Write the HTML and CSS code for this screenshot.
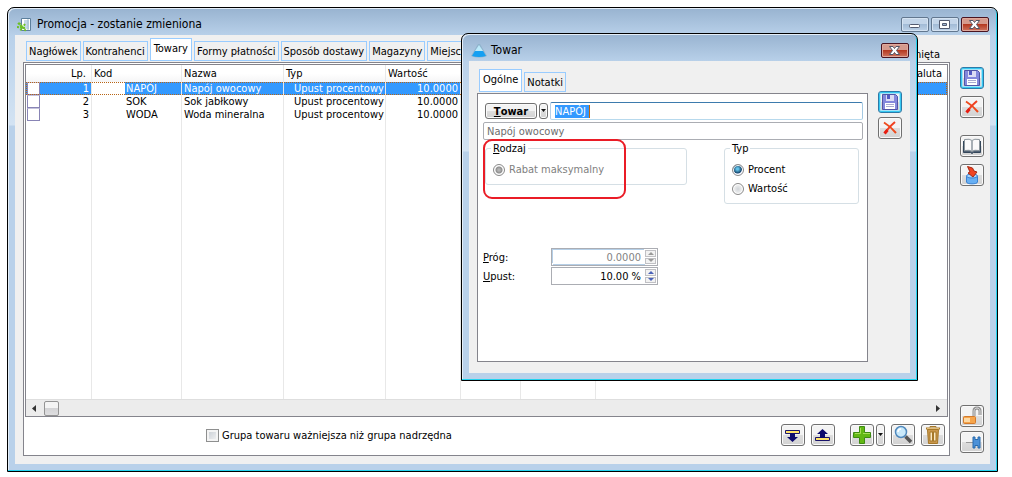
FILE: index.html
```html
<!DOCTYPE html>
<html lang="pl">
<head>
<meta charset="utf-8">
<title>Promocja</title>
<link rel="stylesheet" href="styles.css">
</head>
<body>
<main class="window main-window">
  <header class="titlebar">
    <svg class="title-icon" width="16" height="16" viewBox="0 0 16 16"><path d="M4.500 1.500h9v12h-9z" fill="#fff" stroke="#5c7f9c"/><path d="M7 3h5v9H7z" fill="#c6d9e8"/><path d="M11 2v11" stroke="#9bb8cc"/><path d="M1 6l8 8M8 7L3 14M0 10l9 1M2 6l3 3" stroke="#6cc024" stroke-width="2" stroke-dasharray="2 1"/></svg>
    <h1 class="title">Promocja - zostanie zmieniona</h1>
    <div class="controls">
      <button class="ctl" aria-label="Minimalizuj"><svg width="28" height="15" viewBox="0 0 28 15"><rect x="8.500" y="7.500" width="10" height="3" rx="1" fill="#fff" stroke="#535b70"/></svg></button>
      <button class="ctl" aria-label="Maksymalizuj"><svg width="28" height="15" viewBox="0 0 28 15"><path d="M8.500 3.500h10v8h-10z" fill="#fff" stroke="#535b70"/><path d="M11.500 6.500h4v2h-4z" fill="#9fb7d3" stroke="#535b70"/></svg></button>
      <button class="ctl ctl-close" aria-label="Zamknij"><svg width="28" height="15" viewBox="0 0 28 15"><path d="M8.500 3.500h3.500l1.500 2 1.500-2h3.500L15.500 7.500l3 4H15l-1.500-2-1.500 2H8.500l3-4z" fill="#fff" stroke="#535666"/></svg></button>
    </div>
  </header>
  <div class="content">
    <section class="workspace">
      <nav class="tabs main-tabs">
        <button class="tab">Nagłówek</button>
        <button class="tab">Kontrahenci</button>
        <button class="tab active">Towary</button>
        <button class="tab">Formy płatności</button>
        <button class="tab">Sposób dostawy</button>
        <button class="tab">Magazyny</button>
        <button class="tab">Miejsca</button>
        <span class="status">Zamknięta</span>
      </nav>
      <div class="panel main-panel">
        <div class="grid">
          <table class="items">
            <colgroup><col class="c-lp"><col class="c-kod"><col class="c-nazwa"><col class="c-typ"><col class="c-wart"><col class="c-a"><col class="c-b"><col></colgroup>
            <thead><tr><th class="num">Lp.</th><th>Kod</th><th>Nazwa</th><th>Typ</th><th>Wartość</th><th></th><th></th><th class="end">Waluta</th></tr></thead>
            <tbody>
              <tr class="selected"><td class="lp"><input type="checkbox" class="rowcheck" aria-label="Zaznacz 1"><span>1</span></td><td class="kod">NAPÓJ</td><td>Napój owocowy</td><td class="typ">Upust procentowy</td><td class="num">10.0000</td><td></td><td></td><td></td></tr>
              <tr><td class="lp"><input type="checkbox" class="rowcheck" aria-label="Zaznacz 2"><span>2</span></td><td class="kod">SOK</td><td>Sok jabłkowy</td><td class="typ">Upust procentowy</td><td class="num">10.0000</td><td></td><td></td><td></td></tr>
              <tr><td class="lp"><input type="checkbox" class="rowcheck" aria-label="Zaznacz 3"><span>3</span></td><td class="kod">WODA</td><td>Woda mineralna</td><td class="typ">Upust procentowy</td><td class="num">10.0000</td><td></td><td></td><td></td></tr>
              <tr class="filler"><td></td><td></td><td></td><td></td><td></td><td></td><td></td><td></td></tr>
            </tbody>
          </table>
          <div class="hscroll">
            <button class="arrow" aria-label="W lewo"><svg width="16" height="15" viewBox="0 0 16 15"><path d="M9 4v7L5 7.500z" fill="#333"/></svg></button>
            <span class="thumb"></span>
            <button class="arrow arrow-right" aria-label="W prawo"><svg width="16" height="15" viewBox="0 0 16 15"><path d="M6 4v7l4-3.500z" fill="#333"/></svg></button>
          </div>
        </div>
        <footer class="bottom">
          <label class="check"><input type="checkbox" class="box"><span>Grupa towaru ważniejsza niż grupa nadrzędna</span></label>
          <div class="tools">
            <button class="btn" aria-label="W dół"><svg width="20" height="18" viewBox="0 0 20 18"><path d="M2.500 4.500h14v3h-14z" fill="#ffe36a" stroke="#19146b"/><path d="M7 7h5v4h3l-5.500 5L4 11h3z" fill="#0d0b6d"/></svg></button>
            <button class="btn" aria-label="W górę"><svg width="20" height="18" viewBox="0 0 20 18"><path d="M2.500 11.500h14v3h-14z" fill="#ffe36a" stroke="#19146b"/><path d="M7 12h5V8h3L9.500 3 4 8h3z" fill="#0d0b6d"/></svg></button>
            <span class="sep"></span>
            <button class="btn" aria-label="Dodaj"><svg width="20" height="20" viewBox="0 0 20 20"><path d="M7.500 1.500h5v6h6v5h-6v6h-5v-6h-6v-5h6z" fill="#62b814" stroke="#3c8a12"/><path d="M8.500 3v5.500H3M11 8.500h7" stroke="#a5df58" fill="none"/></svg></button>
            <button class="btn drop" aria-label="Opcje dodawania"><svg width="7" height="4" viewBox="0 0 7 4"><path d="M1 0h5L3.500 3z" fill="#111"/></svg></button>
            <span class="sep small"></span>
            <button class="btn" aria-label="Podgląd"><svg width="20" height="20" viewBox="0 0 20 20"><path d="M12.500 11.500l5.500 5.500" stroke="#555" stroke-width="3.500"/><circle cx="8" cy="7" r="5.500" fill="#c9e9fb" stroke="#5089bd" stroke-width="1.500"/><path d="M5 7q0-3 3-3" stroke="#fff" stroke-width="1.500" fill="none"/></svg></button>
            <span class="sep small"></span>
            <button class="btn" aria-label="Usuń"><svg width="20" height="20" viewBox="0 0 20 20"><path d="M4.500 4.500h11l-1 14h-9z" fill="#c9974c" stroke="#a67829"/><path d="M3 3.500h14" stroke="#a67829" stroke-width="2"/><path d="M7 2.500V1.500h6v1" stroke="#a67829" fill="none"/><path d="M4 3.500h12" stroke="#e2bd79"/><path d="M7 7h6v9H7z" fill="#fbe9c4" stroke="#a67829"/><path d="M10 7v9" stroke="#a67829" stroke-width="2"/></svg></button>
          </div>
        </footer>
      </div>
    </section>
    <aside class="side">
      <button class="btn primary" aria-label="Zapisz"><svg width="16" height="16" viewBox="0 0 16 16"><path d="M.5.5h13l2 2v13H.5z" fill="#8488dc" stroke="#5155a6"/><path d="M4 1h8v6H4z" fill="#dcdcf4"/><path d="M5 1h3v4H5z" fill="#5359c2"/><path d="M3 9h10v6H3z" fill="#fff"/><path d="M4 10.500h8M4 12.500h8" stroke="#a8aad0"/></svg></button>
      <button class="btn" aria-label="Anuluj"><svg width="18" height="18" viewBox="0 0 18 18"><path d="M3 3.500Q9 7 15 14" stroke="#ee4a1c" stroke-width="2" fill="none"/><path d="M14 3Q7 9 4 14" stroke="#f04020" stroke-width="2" fill="none"/><path d="M6.500 11L3.500 14.500" stroke="#e81c10" stroke-width="3"/></svg></button>
      <span class="side-gap"></span>
      <button class="btn" aria-label="Książka"><svg width="20" height="18" viewBox="0 0 20 18"><path d="M1.500 4v11.500h7l1.500 1 1.500-1h7V4" fill="#516174" stroke="#34475a"/><path d="M2.500 2.500q5.500-1 7.500 1 2-2 7.500-1v11q-5.500-1-7.500 1-2-2-7.500-1z" fill="#fafafa" stroke="#8b959c"/><path d="M10 4v10" stroke="#a8afb5" stroke-width="2"/></svg></button>
      <button class="btn" aria-label="Importuj"><svg width="20" height="20" viewBox="0 0 20 20"><path d="M4.500 11v6c0 2.500 11 2.500 11 0v-6z" fill="#67aff3" stroke="#3b82d2"/><ellipse cx="10" cy="11" rx="5.500" ry="2" fill="#a8d4fb" stroke="#3b82d2"/><path d="M5.500 1.500l5 1.500 1.500 3 3 1-4 5-5-4 2-1z" fill="#f04423" stroke="#a72812"/></svg></button>
      <span class="side-fill"></span>
      <button class="btn" aria-label="Odblokuj"><svg width="22" height="20" viewBox="0 0 22 20"><path d="M13 10V5c0-4 6-4 6 0v4" fill="none" stroke="#8e8e8e" stroke-width="3"/><path d="M13 10V5c0-4 6-4 6 0v4" fill="none" stroke="#ddd"/><rect x="2.500" y="10.500" width="12" height="7" rx="1" fill="#f6a54b" stroke="#d37a2c"/><path d="M3 12h6v4H3z" fill="#fdd9a4"/></svg></button>
      <button class="btn" aria-label="Przypnij"><svg width="20" height="18" viewBox="0 0 20 18"><path d="M4 9.500h7" stroke="#999"/><path d="M11 4h2v2.500h3V4h2v11h-2v-2.500h-3V15h-2z" fill="#4b91d8" stroke="#286bad"/></svg></button>
    </aside>
  </div>
</main>

<section class="window dialog" role="dialog" aria-label="Towar">
  <header class="titlebar">
    <svg class="title-icon" width="16" height="16" viewBox="0 0 16 16"><path d="M7 1h2l7 12q-8 3-16 0z" fill="#8fb3cc"/><path d="M8 2L4 8h8z" fill="#bceafa"/><path d="M4 8h8l3 5q-7 2-14 0z" fill="#159ff2"/></svg>
    <h2 class="title">Towar</h2>
    <div class="controls">
      <button class="ctl ctl-close" aria-label="Zamknij okno"><svg width="28" height="15" viewBox="0 0 28 15"><path d="M8.500 3.500h3.500l1.500 2 1.500-2h3.500L15.500 7.500l3 4H15l-1.500-2-1.500 2H8.500l3-4z" fill="#fff" stroke="#535666"/></svg></button>
    </div>
  </header>
  <div class="content">
    <section class="workspace">
      <nav class="tabs dialog-tabs">
        <button class="tab active">Ogólne</button>
        <button class="tab">Notatki</button>
      </nav>
      <div class="panel form">
        <div class="line">
          <button class="btn towar"><u>T</u>owar</button>
          <button class="btn drop short" aria-label="Wybierz towar"><svg width="7" height="4" viewBox="0 0 7 4"><path d="M1 0h5L3.500 3z" fill="#111"/></svg></button>
          <div class="field code"><mark class="hl"><input class="code-input" aria-label="Kod towaru" value="NAPÓJ"></mark></div>
        </div>
        <input class="field name" aria-label="Nazwa towaru" value="Napój owocowy" disabled>
        <div class="groups">
          <fieldset class="group rodzaj"><legend><u>R</u>odzaj</legend>
            <label class="opt off"><input type="radio" class="radio" name="rodzaj" checked disabled><span>Rabat maksymalny</span></label>
          </fieldset>
          <fieldset class="group typ-group"><legend>Typ</legend>
            <label class="opt"><input type="radio" class="radio" name="typ" checked><span>Procent</span></label>
            <label class="opt"><input type="radio" class="radio" name="typ"><span>Wartość</span></label>
          </fieldset>
          <span class="highlight"></span>
        </div>
        <div class="values">
          <label for="prog"><u>P</u>róg:</label>
          <div class="spin off"><input id="prog" value="0.0000" disabled><span class="steps"><button disabled aria-label="Więcej"></button><button disabled aria-label="Mniej"></button></span></div>
          <label for="upust"><u>U</u>pust:</label>
          <div class="spin"><input id="upust" value="10.00 %"><span class="steps"><button aria-label="Zwiększ"></button><button aria-label="Zmniejsz"></button></span></div>
        </div>
      </div>
    </section>
    <aside class="side">
      <button class="btn primary" aria-label="Zapisz towar"><svg width="16" height="16" viewBox="0 0 16 16"><path d="M.5.5h13l2 2v13H.5z" fill="#8488dc" stroke="#5155a6"/><path d="M4 1h8v6H4z" fill="#dcdcf4"/><path d="M5 1h3v4H5z" fill="#5359c2"/><path d="M3 9h10v6H3z" fill="#fff"/><path d="M4 10.500h8M4 12.500h8" stroke="#a8aad0"/></svg></button>
      <button class="btn" aria-label="Anuluj zmiany"><svg width="18" height="18" viewBox="0 0 18 18"><path d="M3 3.500Q9 7 15 14" stroke="#ee4a1c" stroke-width="2" fill="none"/><path d="M14 3Q7 9 4 14" stroke="#f04020" stroke-width="2" fill="none"/><path d="M6.500 11L3.500 14.500" stroke="#e81c10" stroke-width="3"/></svg></button>
    </aside>
  </div>
</section>
</body>
</html>
```
FILE: styles.css
```css
* { box-sizing: border-box; }
body {
  margin: 0;
  height: 100vh;
  padding: 7px 14px 5px 7px;
  background: #fff;
  color: #000;
  position: relative;
  overflow: hidden;
}
body, button, input { font-family: "DejaVu Sans Condensed", "DejaVu Sans", sans-serif; font-size: 11px; line-height: 13px; }
button { padding: 0; color: #000; }
input { margin: 0; }

/* Windows */
.window {
  display: flex;
  flex-direction: column;
  border: 1px solid #000;
  border-radius: 7px 7px 0 0;
  padding: 0 7px 7px;
  background: linear-gradient(#98b3d0, #b9d1ea 28px, #d3e3f3 117px, #b9d1ea 118px);
  box-shadow: inset -1px -1px 0 #23d3ef, inset 1px 1px 0 #e4eef8;
}
.main-window { height: 100%; }
.dialog { position: absolute; left: 461px; right: 94px; top: 33px; bottom: 96px; }
.titlebar { display: flex; align-items: center; height: 27px; flex: none; padding: 6px 1px 0 2px; }
.title { margin: 0 0 0 4px; font-size: 12px; font-weight: 400; flex: 1; }
.title-icon { flex: none; }
.controls { display: flex; gap: 2px; }
.ctl {
  width: 28px;
  height: 15px;
  border: 1px solid #62778f;
  border-radius: 2px;
  background: linear-gradient(#c3d5e9 45%, #a2bbd6 50%, #bdd2e8);
  display: flex;
  align-items: center;
  justify-content: center;
  overflow: hidden;
  box-shadow: inset 0 0 0 1px #d5e3f2;
}
.ctl svg { flex: none; }
.ctl-close { border-color: #4a1420; background: linear-gradient(#d59a8d 45%, #b53a22 50%, #cf7560); box-shadow: inset 0 0 0 1px #e0a99c; }
.content { flex: 1; min-height: 0; display: flex; background: #f0f0f0; padding: 4px 6px 8px 8px; gap: 10px; }
.dialog .content { padding: 8px 8px 11px 8px; }
.workspace { flex: 1; min-width: 0; display: flex; flex-direction: column; }
.panel { flex: 1; min-height: 0; border: 1px solid #84848c; background: #fff; display: flex; flex-direction: column; }

/* Tabs */
.tabs { display: flex; align-items: flex-end; gap: 2px; height: 23px; flex: none; padding-left: 3px; padding-bottom: 1px; }
.dialog-tabs { height: 24px; padding-left: 2px; }
.tab { height: 20px; border: 1px solid #99ccff; background: #f0f0f0; padding: 0 2px; white-space: nowrap; flex: none; }
.tab.active { height: 23px; background: #fff; padding: 0 3px 3px; }
.status { margin-left: auto; padding-right: 10px; }

/* Table */
.grid { flex: 1; min-height: 0; margin: 1px 1px 0; border: 1px solid #84848c; display: flex; flex-direction: column; }
.items { width: 100%; flex: 1; border-collapse: separate; border-spacing: 0; table-layout: fixed; display: table; height: 334px; }
.c-lp { width: 66px; }
.c-kod { width: 90px; }
.c-nazwa { width: 102px; }
.c-typ { width: 102px; }
.c-wart { width: 75px; }
.c-a { width: 60px; }
.c-b { width: 75px; }
.items th { height: 17px; padding: 0 2px; text-align: left; font-weight: 400; border-right: 1px solid #e8e8e8; background: linear-gradient(#fff 50%, #f5f5f6); }
.items td { height: 13px; padding: 0 2px; border-right: 1px solid #e8e8e8; white-space: nowrap; line-height: 13px; }
.items .num { text-align: right; }
.items th.num { padding-right: 5px; }
.items .end { text-align: right; padding-right: 5px; }
.items .kod { padding-left: 34px; }
.items .typ { padding-left: 10px; padding-right: 0; }
.items .filler td { height: auto; }
.items th:last-child, .items td:last-child { border-right: 0; }
.items .lp { padding: 0 2px 0 1px; }
.lp span { float: right; }
.rowcheck { appearance: none; float: left; width: 13px; height: 13px; border: 1px solid #8884b5; border-top-color: #c4c2dc; background: #fff; }
.selected { outline: 1px dotted #b86515; outline-offset: -1px; }
.selected td { background: #3399ff; color: #fff; }
.selected .kod { background: linear-gradient(90deg, #fff 33px, #3399ff 33px); }

.hscroll { display: flex; align-items: center; height: 17px; flex: none; background: #ececec; border-top: 1px solid #dedede; padding: 0 1px; }
.arrow { border: 0; background: none; width: 16px; height: 15px; }
.arrow-right { margin-left: auto; }
.thumb { width: 15px; height: 15px; margin-left: 1px; border: 1px solid #949494; border-radius: 2px; background: linear-gradient(#f4f4f4 45%, #d4d4d6 50%, #dedee0); }

/* Bottom toolbar */
.bottom { display: flex; align-items: center; justify-content: space-between; height: 38px; flex: none; padding: 0 4px 2px 182px; }
.check { display: flex; align-items: center; gap: 3px; }
.box { appearance: none; width: 13px; height: 13px; border: 1px solid #8e8f8f; background: linear-gradient(135deg, #c5cbd2, #f5f5f5); box-shadow: inset 0 0 0 2px #f4f4f4; }
.tools { display: flex; gap: 2px; }
.tools .btn + .btn:nth-child(2) { margin-left: 4px; }
.sep { width: 11px; }
.sep.small { width: 2px; }
.btn {
  display: flex;
  align-items: center;
  justify-content: center;
  flex: none;
  width: 24px;
  height: 22px;
  border: 1px solid #707070;
  border-radius: 3px;
  background: linear-gradient(#f3f3f3 48%, #dddddd 52%, #d2d2d2);
  box-shadow: inset 0 0 0 1px #fafafa;
}
.btn svg { flex: none; }
.btn.drop { width: 9px; }
.btn.drop.short { height: 16px; }
.btn.primary { border-color: #2c7aa8; box-shadow: inset 0 0 0 1px #35c8f2, inset 0 0 0 2px #a5e3f7; }

/* Side toolbar */
.side { display: flex; flex-direction: column; gap: 7px; flex: none; padding-top: 28px; padding-bottom: 3px; }
.side-gap { height: 3px; }
.side-fill { flex: 1; }
.side .btn:last-child { margin-top: -3px; }
.dialog .side { gap: 4px; padding-top: 22px; }
.dialog .side .btn:last-child { margin-top: 0; }

/* Form */
.form { padding: 8px 4px 0 5px; }
.line { display: flex; align-items: center; gap: 2px; padding-left: 2px; }
.towar { width: 52px; height: 16px; font-weight: 700; }
.field { height: 18px; border: 1px solid #abadb3; border-radius: 2px; background: #fff; padding: 0 3px; }
.code { flex: 1; display: flex; align-items: center; border-color: #3d7bad #a4c9e3 #b7d9ed #b5cfe7; padding-left: 4px; }
.hl { display: flex; background: #3399ff; border-right: 1px solid #c86400; }
.code-input { border: 0; padding: 0; background: none; color: #fff; width: 34px; height: 13px; outline: 0; }
.name { width: 100%; margin-top: 2px; color: #6d6d6d; }
.groups { display: flex; align-items: flex-start; justify-content: space-between; position: relative; height: 102px; padding: 2px 4px 0 2px; }
.group { margin: 0; min-width: 0; border: 1px solid #d5dfe5; border-radius: 3px; padding: 5px 8px 4px 7px; }
.group legend { padding: 0 2px; margin-left: -2px; height: 13px; }
.rodzaj { width: 202px; height: 43px; }
.typ-group { width: 135px; height: 62px; }
.opt { display: flex; align-items: center; gap: 4px; height: 19px; }
.opt.off { color: #808080; }
.radio { appearance: none; width: 12px; height: 12px; border: 1px solid #8a8a8a; border-radius: 50%; background: radial-gradient(#d0d4d8, #f4f4f4 70%); box-shadow: inset 0 0 0 1px #fff; }
.radio:checked { background: radial-gradient(circle at 45% 40%, #62c3ea 0 1px, #174a70 4px, #eef 5px); }
.radio:disabled { background: radial-gradient(#b4b4b4 0 1px, #8f8f8f 3px, #f2f2f2 4px); }
.highlight { position: absolute; left: 0; top: -1px; width: 143px; height: 60px; border: 2px solid #ea1c26; border-radius: 9px; }
.values { display: grid; grid-template-columns: 68px 107px; row-gap: 1px; padding-top: 6px; align-items: center; }
.spin { height: 18px; border: 1px solid #abadb3; display: flex; padding: 1px; }
.spin input { flex: 1; min-width: 0; border: 0; padding: 0 4px 0 0; text-align: right; background: #fff; color: #000; }
.spin.off input { color: #838383; box-shadow: -1px -1px 0 #b5cfe7, 0 1px 0 #b5cfe7; }
.steps { display: flex; flex-direction: column; width: 11px; gap: 1px; }
.steps button { flex: 1; border: 1px solid #c0c0c4; background: #f2f2f2; display: flex; align-items: center; justify-content: center; min-height: 0; }
.steps button::after { content: ""; border: 3px solid transparent; border-top: 0; border-bottom: 3px solid #4a62b8; }
.steps button:last-child::after { border-bottom: 0; border-top: 3px solid #4a62b8; }
.steps button:disabled::after { border-bottom-color: #999; border-top-color: #999; }
```
